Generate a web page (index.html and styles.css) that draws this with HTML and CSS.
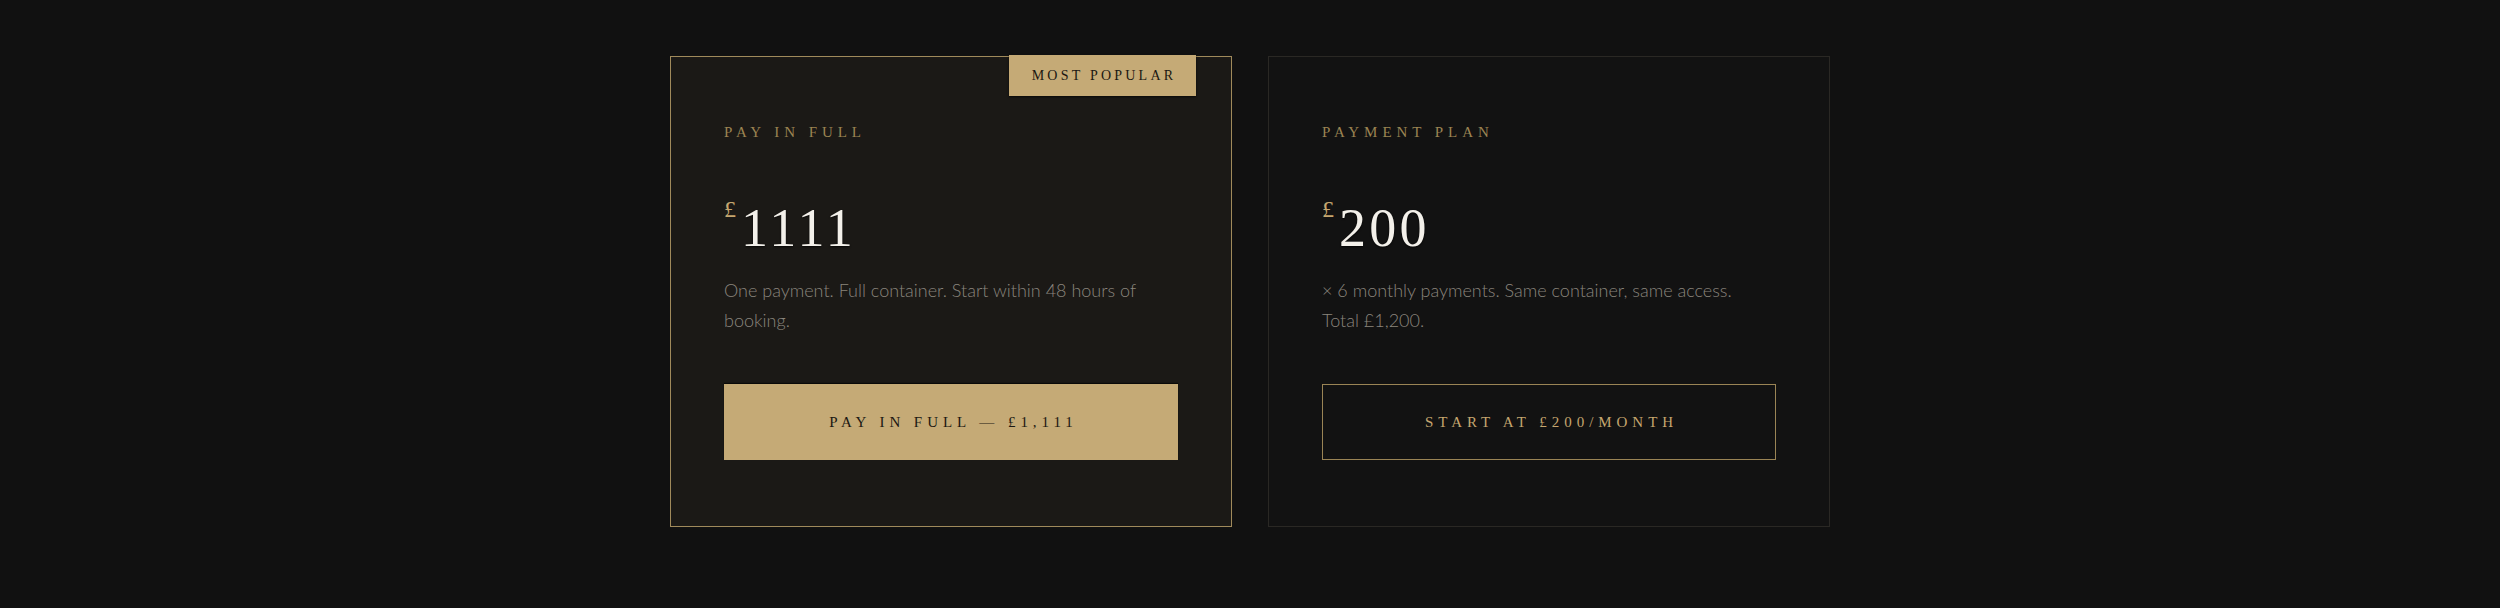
FILE: index.html
```html
<!DOCTYPE html>
<html lang="en">
<head>
<meta charset="utf-8">
<title>Pricing</title>
<link rel="stylesheet" href="styles.css">
</head>
<body>
  <section class="pricing">
    <article class="card card--featured">
      <div class="badge">Most Popular</div>
      <p class="label">Pay in Full</p>
      <div class="price"><span class="currency">£</span><span class="amount">1111</span></div>
      <p class="desc">One payment. Full container. Start within 48 hours of booking.</p>
      <a class="btn btn--solid" href="#">Pay in Full — £1,111</a>
    </article>
    <article class="card">
      <p class="label">Payment Plan</p>
      <div class="price"><span class="currency">£</span><span class="amount">200</span></div>
      <p class="desc">× 6 monthly payments. Same container, same access. Total £1,200.</p>
      <a class="btn btn--outline" href="#">Start at £200/month</a>
    </article>
  </section>
</body>
</html>
```
FILE: styles.css
```css
* { box-sizing: border-box; }

html, body {
  margin: 0;
  padding: 0;
  background: #111111;
}

body {
  font-family: "Lato", "Liberation Sans", sans-serif;
  color: #8a857d;
}

.pricing {
  width: 1160px;
  margin: 0 auto;
  padding-top: 56px;
  display: grid;
  grid-template-columns: 562px 562px;
  column-gap: 36px;
}

.card {
  position: relative;
  display: flex;
  flex-direction: column;
  padding: 64px 53px 66px;
  background: #121212;
  border: 1px solid #2a2824;
}

.card--featured {
  background: #1b1916;
  border-color: #a08a5b;
}

.badge {
  position: absolute;
  top: -2px;
  right: 35px;
  width: 187px;
  height: 41px;
  display: flex;
  align-items: center;
  justify-content: center;
  padding-left: 3px;
  background: #c5aa76;
  color: #1b1812;
  font-family: "Liberation Serif", "Times New Roman", serif;
  font-size: 14px;
  letter-spacing: 0.23em;
  text-transform: uppercase;
  box-shadow: 0 1px 2px rgba(0, 0, 0, 0.7);
}

.label {
  margin: 0;
  font-family: "Liberation Serif", "Times New Roman", serif;
  font-size: 15px;
  line-height: 22px;
  letter-spacing: 0.33em;
  text-transform: uppercase;
  color: #9b8452;
}

.price {
  display: flex;
  align-items: flex-start;
  margin-top: 58px;
  font-family: "Liberation Serif", "Times New Roman", serif;
}

.currency {
  font-size: 24px;
  line-height: 1;
  margin-top: -4px;
  margin-right: 5px;
  color: #c5a66f;
}

.amount {
  font-size: 54px;
  line-height: 54px;
  color: #f3f0ea;
  letter-spacing: 0.06em;
  text-shadow: 0 1px 2px rgba(0, 0, 0, 0.8);
}

.desc {
  max-width: 430px;
  margin: 20px 0 0;
  font-size: 18px;
  font-weight: 300;
  line-height: 30px;
  color: #8a857d;
}

.btn {
  margin-top: 49px;
  height: 76px;
  display: flex;
  align-items: center;
  justify-content: center;
  padding-left: 5px;
  font-family: "Liberation Serif", "Times New Roman", serif;
  font-size: 15px;
  letter-spacing: 0.33em;
  text-transform: uppercase;
  text-decoration: none;
}

.btn--solid {
  background: #c5aa76;
  color: #1c1812;
  box-shadow: 0 -1px 1px rgba(0, 0, 0, 0.6);
}

.btn--outline {
  background: transparent;
  border: 1px solid #9a8455;
  color: #c5a66f;
}
```
